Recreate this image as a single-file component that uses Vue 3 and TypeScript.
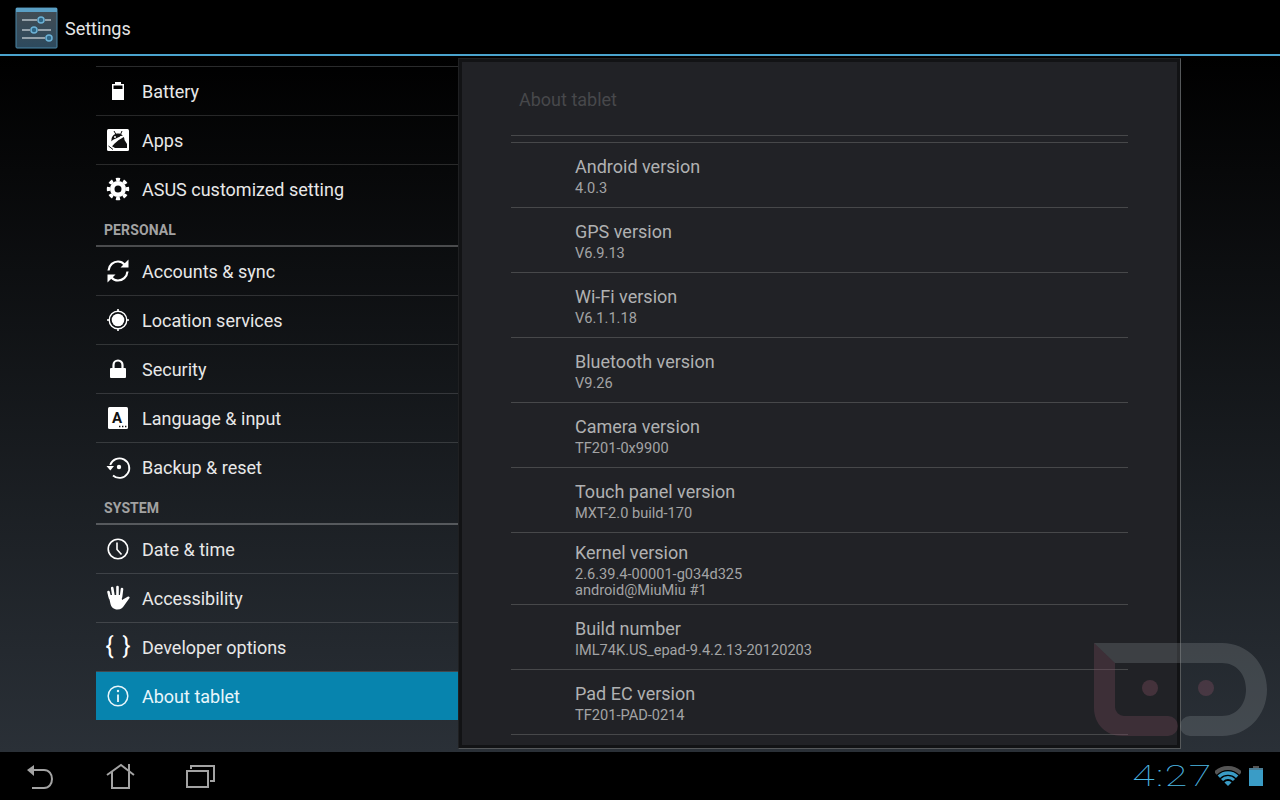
<template>
  <div class="screen">
    <header class="action-bar">
      <svg class="app-icon" width="44" height="42" viewBox="0 0 44 42">
        <defs>
          <linearGradient id="tile" x1="0" y1="0" x2="0" y2="1">
            <stop offset="0" stop-color="#434c52" />
            <stop offset="1" stop-color="#2d4a5e" />
          </linearGradient>
        </defs>
        <rect x="1" y="1" width="41" height="40" rx="1" fill="url(#tile)" stroke="#4b87a8" />
        <rect x="1" y="1" width="41" height="4" fill="#5a9fc4" />
        <path d="M7 13H22M30 13H36M7 23H15M23 23H36M7 31H30" stroke="#b4bfc5" stroke-width="1.300" />
        <circle cx="26" cy="13" r="3" fill="#2e6585" stroke="#6cb2d6" stroke-width="1.500" />
        <circle cx="19" cy="23" r="3" fill="#2e6585" stroke="#6cb2d6" stroke-width="1.500" />
        <circle cx="34" cy="31" r="3" fill="#2e6585" stroke="#6cb2d6" stroke-width="1.500" />
      </svg>
      <span class="app-title">Settings</span>
    </header>

    <main class="content">
      <nav class="menu">
        <template v-for="item in menu" :key="item.label">
          <div v-if="item.section" class="menu-section">{{ item.label }}</div>
          <div v-else class="menu-row" :class="{ active: item.active, plain: item.plain }">
            <svg class="menu-icon" width="32" height="32" viewBox="0 0 32 32">
              <g v-if="item.icon === 'battery'" fill="#fff">
                <path fill-rule="evenodd" d="M13 7h6v2h3v16H10V9h3zM11.500 10.500V14h9v-3.500z" />
              </g>
              <g v-else-if="item.icon === 'apps'">
                <rect x="5" y="5" width="22" height="22" rx="1.500" fill="#fff" />
                <path d="M12 7l2 3.500M20 7l-1.500 3.500" stroke="#111" stroke-width="1" />
                <path d="M9.500 16c0-4 3-6.500 6.500-6.500s6.500 2.500 6.500 6.500l2.500 4v4H13l-5-3z" fill="#111" />
                <path d="M6 19.500c4-3.500 11-7 19-9.500l1 1c-7 3-13 7-17 12.500z" fill="#fff" />
                <path d="M6.500 22l4.500 3.500" stroke="#111" stroke-width="1" />
                <circle cx="13" cy="13" r="1" fill="#fff" />
                <circle cx="19" cy="13" r="1" fill="#fff" />
              </g>
              <g v-else-if="item.icon === 'gear'">
                <circle cx="16" cy="16" r="9.500" fill="none" stroke="#fff" stroke-width="3.400" pathLength="80" stroke-dasharray="5.500 4.500" stroke-dashoffset="2.750" />
                <path fill="#fff" fill-rule="evenodd" d="M16 8a8 8 0 1 1 0 16a8 8 0 1 1 0-16zM16 12.500a3.500 3.500 0 1 0 0 7a3.500 3.500 0 1 0 0-7z" />
              </g>
              <g v-else-if="item.icon === 'sync'">
                <path d="M6.500 15.500C7 10 11.500 6.500 16 6.500c3 0 5 1.200 6.500 3M25.500 16.500c-.5 5.500-5 9-9.500 9-3 0-5-1.200-6.500-3" fill="none" stroke="#fff" stroke-width="2.200" />
                <path d="M26.500 4.500v8h-8zM5.500 27.500v-8h8z" fill="#fff" />
              </g>
              <g v-else-if="item.icon === 'location'">
                <circle cx="16" cy="16" r="8.800" fill="none" stroke="#fff" stroke-width="1.400" />
                <circle cx="16" cy="16" r="6.300" fill="#fff" />
                <path d="M16 5v3M16 24v3M5 16h3M24 16h3" stroke="#fff" stroke-width="1.600" />
              </g>
              <g v-else-if="item.icon === 'lock'">
                <path d="M11.500 16v-4a4.500 4.500 0 0 1 9 0v4" fill="none" stroke="#fff" stroke-width="2.200" />
                <rect x="8" y="15" width="16" height="10" rx="1" fill="#fff" />
              </g>
              <g v-else-if="item.icon === 'language'">
                <rect x="6" y="5" width="20" height="22" rx="1.500" fill="#fff" />
                <text x="15" y="21" class="key-letter">A</text>
                <path d="M17 24.500h1.400M20 24.500h1.400M23 24.500h1.400" stroke="#111" stroke-width="1.400" />
              </g>
              <g v-else-if="item.icon === 'backup'">
                <path d="M8.200 14A9.800 9.800 0 1 1 11 24.500" fill="none" stroke="#fff" stroke-width="1.800" />
                <path d="M4.500 15h7.500l-3.700 4.500z" fill="#fff" />
                <circle cx="17" cy="16" r="2.200" fill="#fff" />
              </g>
              <g v-else-if="item.icon === 'clock'">
                <circle cx="16" cy="16" r="9.800" fill="none" stroke="#fff" stroke-width="1.600" />
                <path d="M15 9.500v7l4.500 5" fill="none" stroke="#fff" stroke-width="1.600" />
              </g>
              <g v-else-if="item.icon === 'hand'">
                <path d="M8 16l-1.500-6M11.500 14l-1.300-8M15.500 14V5M19 15l1-8" stroke="#fff" stroke-width="2.600" stroke-linecap="round" />
                <path d="M6.500 13l13 0 .5 5 6-3.500c1-.4 2 .5 1.500 1.500l-5 7c-1.500 2.500-3.500 4.500-7 4.500-3.800 0-6.300-2.500-7-5.500z" fill="#fff" />
              </g>
              <g v-else-if="item.icon === 'braces'">
                <text x="16" y="23" class="braces">{ }</text>
              </g>
              <g v-else-if="item.icon === 'info'">
                <circle cx="16" cy="16" r="9.800" fill="none" stroke="#e8f6fb" stroke-width="1.500" />
                <path d="M16 14.500v7.500" stroke="#e8f6fb" stroke-width="1.800" />
                <circle cx="16" cy="11" r="1.200" fill="#e8f6fb" />
              </g>
            </svg>
            <span>{{ item.label }}</span>
          </div>
        </template>
      </nav>

      <section class="panel">
        <div class="panel-inner">
          <div class="panel-title">About tablet</div>
          <div class="panel-gap"></div>
          <div v-for="row in info" :key="row.title" class="info-row" :class="{ tall: row.lines.length > 1 }">
            <div class="info-title">{{ row.title }}</div>
            <div v-for="line in row.lines" :key="line" class="info-sub">{{ line }}</div>
          </div>
        </div>
      </section>

      <svg class="watermark" width="175" height="95" viewBox="0 0 175 95">
        <path d="M0 0L21 20V64a9 9 0 0 0 9 9H74a10 10 0 0 1 0 20H28C12 93 0 81 0 65z" fill="#7a4a5c" fill-opacity=".32" />
        <path d="M0 0H128C153 0 173 20 173 46.500S153 93 128 93H96a10 10 0 0 1 0-20H128C142 73 152 62 152 46.500S142 20 128 20H21z" fill="#8a8f92" fill-opacity=".28" />
        <circle cx="56" cy="45" r="8" fill="#7a4a5c" fill-opacity=".4" />
        <circle cx="112" cy="45" r="8" fill="#7a4a5c" fill-opacity=".4" />
      </svg>
    </main>

    <footer class="system-bar">
      <div class="nav-buttons">
        <svg width="80" height="48" viewBox="0 0 80 48" fill="none" stroke="#a3a3a3" stroke-width="2">
          <path d="M33 18H44C49 18 52 22 52 27S49 36 44 36H32" />
          <path d="M27 18L34 13V24z" fill="#a3a3a3" stroke="none" />
        </svg>
        <svg width="80" height="48" viewBox="0 0 80 48" fill="none" stroke="#a3a3a3" stroke-width="2">
          <path d="M27 23L41 13L54 23M49 12V19M32 20V36H49V20" />
        </svg>
        <svg width="80" height="48" viewBox="0 0 80 48" fill="none" stroke="#a3a3a3" stroke-width="2">
          <path d="M31 17V14H54V29H50" />
          <path d="M27 19H48V35H27z" />
        </svg>
      </div>
      <div class="status">
        <span class="clock">4:27</span>
        <svg class="wifi" width="26" height="20" viewBox="0 0 26 20" fill="none">
          <path d="M.27 7.270A18 18 0 0 1 25.730 7.270" stroke="#555" stroke-width="4" />
          <path d="M3.810 10.810A13 13 0 0 1 22.190 10.810" stroke="#3a9cc6" stroke-width="3.400" />
          <path d="M6.990 13.990A8.500 8.500 0 0 1 19.010 13.990" stroke="#3a9cc6" stroke-width="3" />
          <path d="M13 20L9.460 16.460A5 5 0 0 1 16.540 16.460z" fill="#3a9cc6" />
        </svg>
        <svg class="batt" width="14" height="20" viewBox="0 0 14 20">
          <path d="M4 0h6v2H4z" fill="#555" />
          <path d="M0 2h14v2H0z" fill="#4a7d95" />
          <path d="M0 4h14v16H0z" fill="#3a9cc6" />
        </svg>
      </div>
    </footer>
  </div>
</template>

<script setup lang="ts">
interface MenuItem {
  label: string
  icon?: string
  section?: boolean
  active?: boolean
  plain?: boolean
}

interface InfoRow {
  title: string
  lines: string[]
}

const menu: MenuItem[] = [
  { label: "Battery", icon: "battery" },
  { label: "Apps", icon: "apps" },
  { label: "ASUS customized setting", icon: "gear", plain: true },
  { label: "PERSONAL", section: true },
  { label: "Accounts & sync", icon: "sync" },
  { label: "Location services", icon: "location" },
  { label: "Security", icon: "lock" },
  { label: "Language & input", icon: "language" },
  { label: "Backup & reset", icon: "backup", plain: true },
  { label: "SYSTEM", section: true },
  { label: "Date & time", icon: "clock" },
  { label: "Accessibility", icon: "hand" },
  { label: "Developer options", icon: "braces" },
  { label: "About tablet", icon: "info", active: true, plain: true },
]

const info: InfoRow[] = [
  { title: "Android version", lines: ["4.0.3"] },
  { title: "GPS version", lines: ["V6.9.13"] },
  { title: "Wi-Fi version", lines: ["V6.1.1.18"] },
  { title: "Bluetooth version", lines: ["V9.26"] },
  { title: "Camera version", lines: ["TF201-0x9900"] },
  { title: "Touch panel version", lines: ["MXT-2.0 build-170"] },
  { title: "Kernel version", lines: ["2.6.39.4-00001-g034d325", "android@MiuMiu #1"] },
  { title: "Build number", lines: ["IML74K.US_epad-9.4.2.13-20120203"] },
  { title: "Pad EC version", lines: ["TF201-PAD-0214"] },
]
</script>

<style>
body {
  background: #000;
}
</style>

<style scoped>
.screen {
  width: 1280px;
  height: 800px;
  display: flex;
  flex-direction: column;
  overflow: hidden;
  font-family: Roboto, "Liberation Sans", sans-serif;
  background: #000;
}

.action-bar {
  height: 54px;
  flex: none;
  display: flex;
  align-items: center;
  box-sizing: content-box;
  padding-left: 15px;
  gap: 6px;
  border-bottom: 2px solid #4aa3cd;
}

.app-icon {
  display: block;
  margin-top: 2px;
}

.app-title {
  font-size: 18px;
  color: #e6e6e6;
  margin-top: 2px;
}

.content {
  flex: 1;
  position: relative;
  display: flex;
  align-items: flex-start;
  padding-left: 96px;
  background: linear-gradient(#000, #2a3037);
}

.menu {
  width: 362px;
  flex: none;
  margin-top: 10px;
  border-top: 1px solid #2a2b2c;
}

.menu-row {
  height: 48px;
  display: flex;
  align-items: center;
  gap: 8px;
  padding-left: 6px;
  font-size: 18px;
  color: #e8e8e8;
  border-bottom: 1px solid rgba(255, 255, 255, 0.14);
}

.menu-row.plain {
  border-bottom: none;
}

.menu-row.active {
  background: #0784ae;
  color: #e8f6fb;
}

.menu-icon {
  flex: none;
  display: block;
}

.key-letter {
  font: 700 15px Roboto, sans-serif;
  fill: #111;
  text-anchor: middle;
}

.braces {
  font: 400 24px Roboto, sans-serif;
  fill: #fff;
  text-anchor: middle;
  word-spacing: 3px;
}

.menu-section {
  height: 34px;
  box-sizing: border-box;
  padding: 9px 0 0 8px;
  font-size: 14px;
  line-height: 16px;
  font-weight: 700;
  color: #a2a2a2;
  letter-spacing: 0.1px;
  border-bottom: 2px solid rgba(255, 255, 255, 0.26);
}

.panel {
  flex: none;
  width: 723px;
  height: 691px;
  margin-top: 2px;
  box-sizing: border-box;
  padding: 3px;
  background: #121315;
  border: 1px solid #1f2022;
  border-right-color: #55585a;
  border-bottom-color: #55585a;
}

.panel-inner {
  height: 100%;
  box-sizing: border-box;
  padding: 0 49px 0 49px;
  background: #212226;
}

.panel-title {
  height: 74px;
  box-sizing: border-box;
  padding: 27px 0 0 8px;
  font-size: 18px;
  line-height: 22px;
  color: #47484b;
  border-bottom: 1px solid #47484a;
}

.panel-gap {
  height: 7px;
  box-sizing: border-box;
  border-bottom: 1px solid #47484a;
}

.info-row {
  height: 65px;
  box-sizing: border-box;
  padding: 2px 0 0 64px;
  display: flex;
  flex-direction: column;
  justify-content: center;
  border-bottom: 1px solid #47484a;
}

.info-row.tall {
  height: 72px;
  padding-top: 3px;
}

.info-title {
  font-size: 18px;
  line-height: 21px;
  color: #b0b1b2;
  margin-bottom: 3px;
}

.info-sub {
  font-size: 14.6px;
  line-height: 16px;
  color: #a3a4a5;
}

.watermark {
  position: absolute;
  left: 1094px;
  top: 587px;
  pointer-events: none;
}

.system-bar {
  height: 48px;
  flex: none;
  display: flex;
  align-items: center;
  justify-content: space-between;
  background: #000;
}

.nav-buttons {
  display: flex;
}

.nav-buttons svg {
  display: block;
}

.status {
  display: flex;
  align-items: center;
  padding-right: 17px;
}

.clock {
  display: inline-block;
  font-size: 29px;
  line-height: 30px;
  font-weight: 100;
  color: #4db8e4;
  letter-spacing: 1px;
  transform: scaleX(1.42);
  transform-origin: right center;
  margin-right: 1px;
}

.wifi {
  display: block;
  margin: 0 8px 0 1px;
}

.batt {
  display: block;
}
</style>
